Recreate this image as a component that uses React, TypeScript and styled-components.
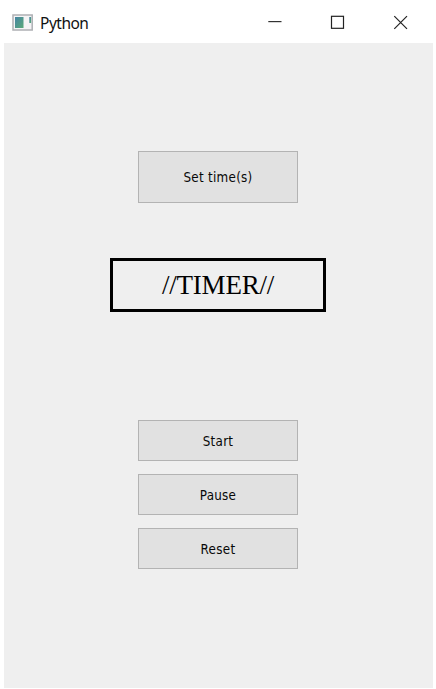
import React from "react";
import styled, { createGlobalStyle } from "styled-components";

const GlobalStyle = createGlobalStyle`
  * { box-sizing: border-box; }
  body { margin: 0; background: #fff; overflow: hidden; }
`;

const Window = styled.div`
  width: 436px;
  height: 689px;
  display: flex;
  flex-direction: column;
  background: #fff;
  padding: 0 3px 1px 4px;
`;

const TitleBar = styled.header`
  height: 43px;
  flex: none;
  display: flex;
  align-items: center;
  padding: 2px 1px 0 8px;
`;

const AppIcon = styled.svg`
  display: block;
  flex: none;
  margin-top: -1px;
`;

const Title = styled.span`
  margin-left: 7px;
  flex: 1;
  font: 15.5px/20px "Noto Sans", "Open Sans", sans-serif;
  letter-spacing: -0.5px;
  color: #111;
`;

const Controls = styled.div`
  display: flex;
`;

const ControlButton = styled.button`
  width: 63px;
  height: 41px;
  padding: 0;
  border: 0;
  background: none;
  display: flex;
  align-items: center;
  justify-content: center;
`;

const Content = styled.main`
  flex: 1;
  background: #efefef;
  padding: 108px 1px 0 0;
  display: flex;
  flex-direction: column;
  align-items: center;
`;

const PushButton = styled.button<{ $height: number }>`
  width: 160px;
  height: ${(p) => p.$height}px;
  padding: 2px 0 0;
  border: 1px solid #b3b3b3;
  background: #e1e1e1;
  color: #080808;
  font: 13.3px/16px "DejaVu Sans Condensed", "DejaVu Sans", sans-serif;
  font-stretch: condensed;
  letter-spacing: 0.28px;
`;

const TimerDisplay = styled.div`
  width: 216px;
  height: 54px;
  margin-top: 55px;
  border: 3px solid #000;
  display: flex;
  align-items: center;
  justify-content: center;
  font: 27px/32px "Liberation Serif", serif;
  letter-spacing: -0.2px;
  color: #000;
`;

const Actions = styled.div`
  margin-top: 108px;
  display: flex;
  flex-direction: column;
  gap: 13px;
`;

export default function App() {
  return (
    <Window>
      <GlobalStyle />
      <TitleBar>
        <AppIcon width="21" height="17" viewBox="0 0 21 17">
          <defs>
            <linearGradient id="pane" x1="0" y1="0" x2="1" y2="1">
              <stop offset="0" stopColor="#4684a4" />
              <stop offset="1" stopColor="#59aa78" />
            </linearGradient>
          </defs>
          <rect x="1" y="1" width="19.2" height="15" fill="#f4f4f5" stroke="#aeb0b4" strokeWidth="1.5" />
          <rect x="3" y="3" width="8.5" height="11" fill="url(#pane)" />
          <rect x="17.3" y="3" width="1.8" height="6" fill="url(#pane)" />
        </AppIcon>
        <Title>Python</Title>
        <Controls>
          <ControlButton aria-label="Minimize">
            <svg width="15" height="15" viewBox="0 0 15 15">
              <path d="M1.3 6.6H14.5" stroke="#333" strokeWidth="1.2" />
            </svg>
          </ControlButton>
          <ControlButton aria-label="Maximize">
            <svg width="15" height="15" viewBox="0 0 15 15">
              <rect x="1.5" y="1.3" width="12" height="12" fill="none" stroke="#222" strokeWidth="1.2" />
            </svg>
          </ControlButton>
          <ControlButton aria-label="Close">
            <svg width="15" height="15" viewBox="0 0 15 15">
              <path d="M1.3 1.2L14 13.9M14 1.2L1.3 13.9" stroke="#222" strokeWidth="1.2" />
            </svg>
          </ControlButton>
        </Controls>
      </TitleBar>
      <Content>
        <PushButton $height={52}>Set time(s)</PushButton>
        <TimerDisplay>//TIMER//</TimerDisplay>
        <Actions>
          <PushButton $height={41}>Start</PushButton>
          <PushButton $height={41}>Pause</PushButton>
          <PushButton $height={41}>Reset</PushButton>
        </Actions>
      </Content>
    </Window>
  );
}
